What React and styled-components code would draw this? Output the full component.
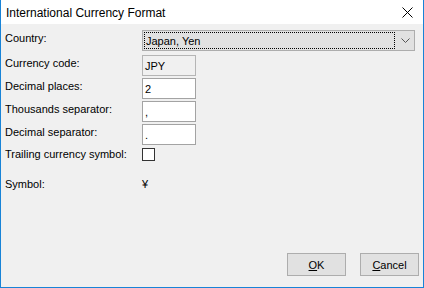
import React from 'react';
import styled, { createGlobalStyle } from 'styled-components';

const GlobalStyle = createGlobalStyle`
  html, body {
    margin: 0;
    padding: 0;
    background: #ffffff;
  }
  body {
    font-family: "Liberation Sans", Arial, sans-serif;
  }
`;

const Window = styled.div`
  box-sizing: border-box;
  width: 424px;
  height: 288px;
  display: flex;
  flex-direction: column;
  background: #f0f0f0;
  border: 1px solid #1883d7;
  border-top: none;
  color: #000;
  font-size: 11px;
`;

const TitleBar = styled.div`
  height: 24px;
  flex: none;
  display: flex;
  align-items: center;
  justify-content: space-between;
  background: #ffffff;
  padding: 1px 10px 0 5px;
  box-sizing: border-box;
  font-size: 12px;
`;

const Form = styled.div`
  display: flex;
  flex-direction: column;
  padding: 6px 8px 0 4px;
`;

const Row = styled.div`
  display: grid;
  grid-template-columns: 137px 1fr;
  align-items: ${(p) => (p.$center ? 'center' : 'start')};
  margin-top: ${(p) => p.$gap || 0}px;
`;

const Label = styled.div`
  line-height: 14px;
  padding-top: ${(p) => (p.$center ? 0 : 1)}px;
  white-space: nowrap;
`;

const Combo = styled.div`
  box-sizing: border-box;
  height: 21px;
  display: flex;
  align-items: stretch;
  background: #e1e1e1;
  border: 1px solid #adadad;
`;

const FocusText = styled.div`
  flex: 1;
  margin: 1px;
  border: 1px dotted #000;
  display: flex;
  align-items: center;
  padding-left: 1px;
`;

const Arrow = styled.div`
  width: 18px;
  display: flex;
  align-items: center;
  justify-content: center;
`;

const Field = styled.div`
  box-sizing: border-box;
  width: 54px;
  height: 21px;
  display: flex;
  align-items: center;
  padding-left: 2px;
  border: 1px solid ${(p) => (p.$readOnly ? '#b5b5b5' : '#a3a3a3')};
  background: ${(p) => (p.$readOnly ? '#f0f0f0' : '#ffffff')};
`;

const Check = styled.div`
  box-sizing: border-box;
  width: 13px;
  height: 13px;
  border: 1px solid #333;
  background: #fff;
`;

const Value = styled.div`
  line-height: 14px;
  padding-top: 1px;
`;

const Footer = styled.div`
  margin-top: auto;
  display: flex;
  justify-content: flex-end;
  gap: 14px;
  padding: 0 4px 11px 0;
`;

const Button = styled.div`
  box-sizing: border-box;
  width: 59px;
  height: 23px;
  display: flex;
  align-items: center;
  justify-content: center;
  background: #e1e1e1;
  border: 1px solid #adadad;
`;

export default function App() {
  return (
    <>
      <GlobalStyle />
      <Window>
        <TitleBar>
          <span>International Currency Format</span>
          <svg width="11" height="11" viewBox="0 0 11 11">
            <path d="M0.5 0.5 L10.5 10.5 M10.5 0.5 L0.5 10.5" stroke="#000" strokeWidth="1" />
          </svg>
        </TitleBar>
        <Form>
          <Row>
            <Label>Country:</Label>
            <Combo>
              <FocusText>Japan, Yen</FocusText>
              <Arrow>
                <svg width="9" height="5" viewBox="0 0 9 5">
                  <path d="M0.5 0.5 L4.5 4.5 L8.5 0.5" stroke="#555" fill="none" strokeWidth="1" />
                </svg>
              </Arrow>
            </Combo>
          </Row>
          <Row $gap={4}>
            <Label>Currency code:</Label>
            <Field $readOnly>JPY</Field>
          </Row>
          <Row $gap={2}>
            <Label>Decimal places:</Label>
            <Field>2</Field>
          </Row>
          <Row $gap={2}>
            <Label>Thousands separator:</Label>
            <Field>,</Field>
          </Row>
          <Row $gap={2}>
            <Label>Decimal separator:</Label>
            <Field>.</Field>
          </Row>
          <Row $gap={2} $center>
            <Label $center>Trailing currency symbol:</Label>
            <Check />
          </Row>
          <Row $gap={15}>
            <Label>Symbol:</Label>
            <Value>¥</Value>
          </Row>
        </Form>
        <Footer>
          <Button><u>O</u>K</Button>
          <Button><u>C</u>ancel</Button>
        </Footer>
      </Window>
    </>
  );
}
